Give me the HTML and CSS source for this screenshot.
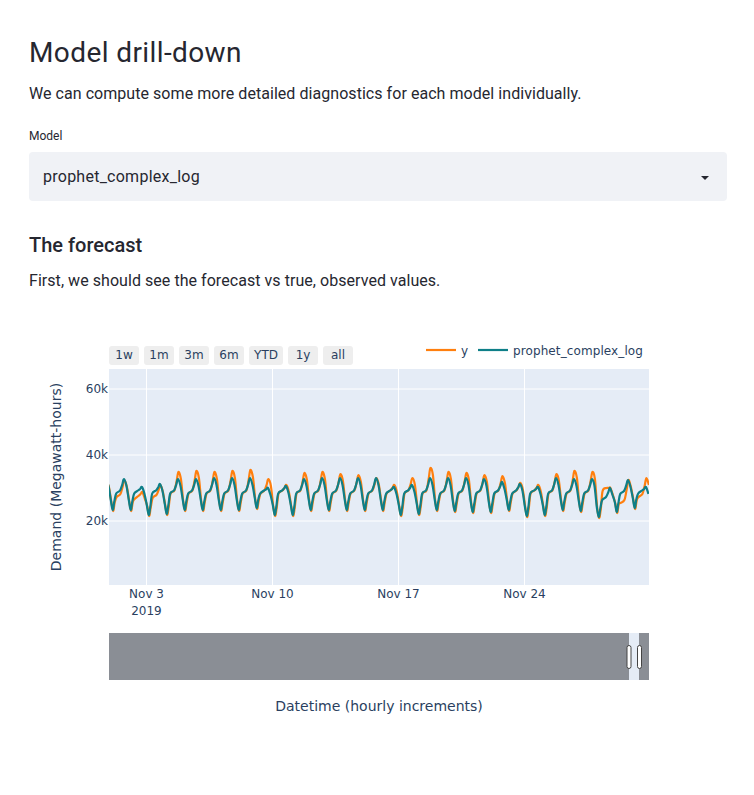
FILE: index.html
```html
<!DOCTYPE html>
<html lang="en">
<head>
  <meta charset="UTF-8">
  <title>Model drill-down</title>
  <link rel="stylesheet" href="styles.css">
</head>
<body>
  <div class="container">
    <h1>Model drill-down</h1>
    <p class="intro">We can compute some more detailed diagnostics for each model individually.</p>
    <div class="field-label">Model</div>
    <div class="select">
      <span>prophet_complex_log</span>
      <svg class="caret" width="8" height="4" viewBox="0 0 8 4"><polygon points="0,0 8,0 4,4"></polygon></svg>
    </div>
    <h3>The forecast</h3>
    <p class="sub">First, we should see the forecast vs true, observed values.</p>

    <svg class="chart" width="698" height="450" viewBox="29 320 698 450">
      <defs>
        <clipPath id="plot-clip"><rect x="109" y="369" width="540" height="216"></rect></clipPath>
      </defs>

      <g class="range-buttons">
        <rect x="109" y="346" width="30" height="19" rx="3"></rect><text x="124" y="359">1w</text>
        <rect x="144" y="346" width="30" height="19" rx="3"></rect><text x="159" y="359">1m</text>
        <rect x="179" y="346" width="30" height="19" rx="3"></rect><text x="194" y="359">3m</text>
        <rect x="214" y="346" width="30" height="19" rx="3"></rect><text x="229" y="359">6m</text>
        <rect x="249" y="346" width="34" height="19" rx="3"></rect><text x="266" y="359">YTD</text>
        <rect x="288" y="346" width="30" height="19" rx="3"></rect><text x="303" y="359">1y</text>
        <rect x="323" y="346" width="30" height="19" rx="3"></rect><text x="338" y="359">all</text>
      </g>

      <g class="legend">
        <line class="line-y" x1="426" y1="350" x2="456" y2="350"></line>
        <text x="461" y="355">y</text>
        <line class="line-model" x1="478" y1="350" x2="508" y2="350"></line>
        <text x="513" y="355">prophet_complex_log</text>
      </g>

      <rect class="plot-bg" x="109" y="369" width="540" height="216"></rect>
      <g class="grid">
        <line x1="109" y1="389" x2="649" y2="389"></line>
        <line x1="109" y1="455" x2="649" y2="455"></line>
        <line x1="109" y1="521" x2="649" y2="521"></line>
        <line x1="146.5" y1="369" x2="146.5" y2="585"></line>
        <line x1="272.5" y1="369" x2="272.5" y2="585"></line>
        <line x1="398.5" y1="369" x2="398.5" y2="585"></line>
        <line x1="524.5" y1="369" x2="524.5" y2="585"></line>
      </g>
      <g clip-path="url(#plot-clip)">
        <path id="series-y" class="line-y" fill="none"></path>
        <path id="series-model" class="line-model" fill="none"></path>
      </g>

      <g class="ticks-y">
        <text x="108" y="393">60k</text>
        <text x="108" y="459">40k</text>
        <text x="108" y="525">20k</text>
      </g>
      <g class="ticks-x">
        <text x="146.5" y="598">Nov 3</text>
        <text x="146.5" y="615">2019</text>
        <text x="272.5" y="598">Nov 10</text>
        <text x="398.5" y="598">Nov 17</text>
        <text x="524.5" y="598">Nov 24</text>
      </g>
      <text class="axis-title" transform="translate(61 477) rotate(-90)">Demand (Megawatt-hours)</text>

      <rect class="slider-mask" x="109" y="633" width="520" height="47"></rect>
      <rect class="slider-window" x="629" y="633" width="10" height="47"></rect>
      <rect class="slider-mask" x="639" y="633" width="10" height="47"></rect>
      <rect class="slider-handle" x="627" y="645.5" width="4" height="23" rx="2"></rect>
      <rect class="slider-handle" x="637.5" y="645.5" width="4" height="23" rx="2"></rect>

      <text class="axis-title" x="379" y="711">Datetime (hourly increments)</text>
    </svg>
  </div>
  <script src="chart.js"></script>
</body>
</html>
```

FILE: styles.css
```css
body { margin: 0; background: #fff; color: #262730; font-family: Roboto, sans-serif; }
.container { padding: 36px 27px 0 29px; }
h1 { margin: 0; font-size: 28px; font-weight: 400; line-height: 34px; letter-spacing: 0.4px; }
h3 { margin: 32px 0 0; font-size: 20px; font-weight: 500; line-height: 24px; }
.intro, .sub { margin: 0; font-size: 16px; line-height: 24px; letter-spacing: 0.05px; }
.intro { margin-top: 12px; }
.sub { margin-top: 12px; }
.field-label { margin-top: 22px; font-size: 12px; line-height: 16px; }
.select { display: flex; align-items: center; justify-content: space-between; height: 49px; margin-top: 8px; padding: 0 18px 0 14px; background: #f0f2f6; border-radius: 4px; font-size: 16px; letter-spacing: 0.25px; }
.caret { fill: #262730; margin-top: 2px; }
.chart { display: block; margin-top: 27px; font-family: "DejaVu Sans", sans-serif; font-size: 12px; fill: #2a3f5f; }
.range-buttons rect { fill: #eeeeee; }
.range-buttons text { text-anchor: middle; }
.legend text { letter-spacing: 0.1px; }
.line-y { stroke: #ff7f0e; stroke-width: 2.2; }
.line-model { stroke: #0e7f88; stroke-width: 2.2; }
.plot-bg { fill: #e5ecf6; }
.grid line { stroke: #fff; stroke-width: 1; }
.ticks-y text { text-anchor: end; }
.ticks-x text { text-anchor: middle; }
.axis-title { font-size: 14px; text-anchor: middle; }
.slider-mask { fill: #8a8e95; }
.slider-window { fill: #e5ecf6; }
.slider-handle { fill: #fff; stroke: #444; stroke-width: 1; }
```

FILE: chart.js
```js
// one peak per day, 18px apart; values are pixel heights read off the plot
const FIRST_PEAK = 124;
const DAY = 18;

const modelPeaks = [479,487,484,479,479,478,478,478,488,486,479,478,478,478,478,487,485,478,478,478,479,482,484,487,478,479,479,488,480,487];
const yPeaks = [480,492,485,472,471,472,471,470,479,485,473,472,474,475,478,485,478,468,472,473,475,476,483,485,474,471,472,488,480,478];
const modelLows = [510,510,515,514,510,510,510,510,508,515,515,510,510,510,510,510,515,514,510,511,512,512,510,516,515,510,511,517,512,508];

// days whose morning shoulder sits away from the usual level
const modelShoulders = { 27: 497, 28: 491 };
const yShoulders = { 0: 494, 1: 496, 2: 495, 27: 488, 28: 500, 29: 494 };

function dayPoints(peaks, lows, shoulders, shift, lowShift) {
  const pts = [[FIRST_PEAK - DAY + shift, peaks[0] + 2]];
  for (let i = 0; i < peaks.length; i++) {
    const p = FIRST_PEAK + i * DAY + shift;
    const low = lows[i] + lowShift;
    const prev = i === 0 ? peaks[0] : peaks[i - 1];
    const shoulder = shoulders[i] || 490.5;
    // fall from last peak, night low, morning shoulder, evening peak
    pts.push([p - 15.5, prev + 7]);
    pts.push([p - 13.2, low - 10]);
    pts.push([p - 11.3, low]);
    pts.push([p - 9.6, low - 9]);
    pts.push([p - 7.8, shoulder + 3]);
    pts.push([p - 4, shoulder]);
    pts.push([p - 1.8, (shoulder + peaks[i]) / 2]);
    pts.push([p, peaks[i]]);
  }
  const last = FIRST_PEAK + peaks.length * DAY + shift;
  pts.push([last - 15.5, peaks[peaks.length - 1] + 7]);
  return pts;
}

// catmull-rom through the points
function toPath(pts) {
  let d = 'M' + pts[0][0] + ',' + pts[0][1];
  for (let i = 0; i < pts.length - 1; i++) {
    const a = pts[Math.max(i - 1, 0)];
    const b = pts[i];
    const c = pts[i + 1];
    const e = pts[Math.min(i + 2, pts.length - 1)];
    const c1x = b[0] + (c[0] - a[0]) / 6;
    const c1y = b[1] + (c[1] - a[1]) / 6;
    const c2x = c[0] - (e[0] - b[0]) / 6;
    const c2y = c[1] - (e[1] - b[1]) / 6;
    d += ' C' + c1x.toFixed(1) + ',' + c1y.toFixed(1) + ' ' + c2x.toFixed(1) + ',' + c2y.toFixed(1) + ' ' + c[0].toFixed(1) + ',' + c[1].toFixed(1);
  }
  return d;
}

document.getElementById('series-y').setAttribute('d', toPath(dayPoints(yPeaks, modelLows, yShoulders, 0.4, 1)));
document.getElementById('series-model').setAttribute('d', toPath(dayPoints(modelPeaks, modelLows, modelShoulders, 0, 0)));
```
